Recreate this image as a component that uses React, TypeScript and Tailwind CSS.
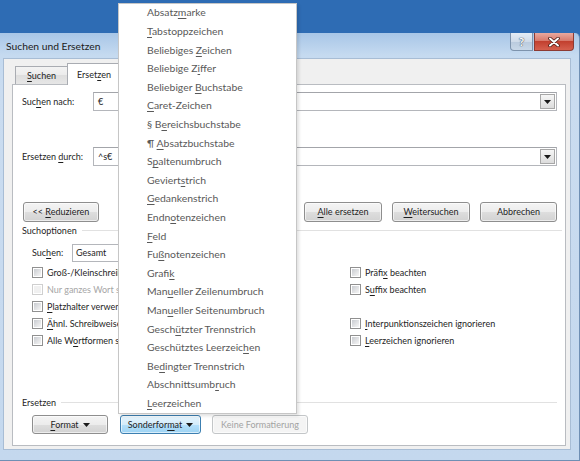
import type { ReactNode } from 'react';

// '&' marks the accelerator letter, like a Windows resource string
function Acc({ text }: { text: string }) {
  const i = text.indexOf('&');
  if (i < 0) return <span>{text}</span>;
  return (
    <span className="whitespace-pre">
      {text.slice(0, i)}
      <span className="underline underline-offset-[1.5px]">{text[i + 1]}</span>
      {text.slice(i + 2)}
    </span>
  );
}

const menuItems = [
  'Absatz&marke',
  '&Tabstoppzeichen',
  'Beliebiges &Zeichen',
  'Beliebige Z&iffer',
  'Beliebiger &Buchstabe',
  '&Caret-Zeichen',
  '§ B&ereichsbuchstabe',
  '¶ &Absatzbuchstabe',
  'S&paltenumbruch',
  'Geviert&strich',
  '&Gedankenstrich',
  'Endn&otenzeichen',
  '&Feld',
  'Fu&ßnotenzeichen',
  'Grafi&k',
  'Man&ueller Zeilenumbruch',
  'Man&ueller Seitenumbruch',
  'Gesch&ützter Trennstrich',
  'Geschütztes Leerzeic&hen',
  'Be&dingter Trennstrich',
  'Abschnittsumb&ruch',
  '&Leerzeichen',
];

function Arrow({ className = '' }: { className?: string }) {
  return (
    <svg width="7" height="4" viewBox="0 0 7 4" className={className}>
      <polygon points="0,0 7,0 3.5,4" fill="#1a1a1a" />
    </svg>
  );
}

type Variant = 'normal' | 'hot' | 'disabled';

const buttonStyles: Record<Variant, string> = {
  normal:
    'border-[#8e8e8e] bg-[linear-gradient(#f4f4f4_0%,#ececec_50%,#dedede_50%,#d2d2d2_100%)] text-[#1e1e1e]',
  hot: 'border-[#3c7fb1] bg-[linear-gradient(#e6f4fc_0%,#d3ecfb_50%,#b5e0fb_50%,#9dd3f3_100%)] text-[#1e1e1e]',
  disabled: 'border-[#c3c6c8] bg-[#f4f4f4] text-[#a3a3a3]',
};

function Button({
  label,
  width,
  variant = 'normal',
  arrow = false,
}: {
  label: string;
  width: string;
  variant?: Variant;
  arrow?: boolean;
}) {
  return (
    <div
      className={`${width} h-full flex items-center justify-center gap-[4px] rounded-[3px] border shadow-[inset_0_0_0_1px_rgba(255,255,255,0.6)] ${buttonStyles[variant]}`}
    >
      <Acc text={label} />
      {arrow && <Arrow />}
    </div>
  );
}

function ComboBox({ value }: { value: string }) {
  return (
    <div className="flex-1 h-full flex items-center justify-between bg-white border border-[#b4b6bb] border-t-[#a3a5aa] pl-[4px] pr-[1px]">
      <span className="text-[#1e1e1e]">{value}</span>
      <div className="w-[15px] h-[15px] flex items-center justify-center border border-[#a7a7a7] bg-[linear-gradient(#f6f6f6,#dcdcdc)]">
        <Arrow />
      </div>
    </div>
  );
}

function Checkbox({
  label,
  disabled = false,
  clip = false,
}: {
  label: string;
  disabled?: boolean;
  clip?: boolean;
}) {
  return (
    <div className="h-[17px] flex items-center gap-[4px] whitespace-nowrap">
      <div
        className={`w-[11px] h-[11px] shrink-0 border p-[1px] bg-white ${
          disabled ? 'border-[#cfcfcf]' : 'border-[#909090]'
        }`}
      >
        <div
          className={`w-full h-full ${
            disabled
              ? 'bg-[#f0f0f0]'
              : 'bg-[linear-gradient(135deg,#c9ccd1_0%,#e2e3e5_55%,#f6f6f6_100%)]'
          }`}
        />
      </div>
      {/* left column runs under the open menu, so cut it at the menu edge */}
      <span
        className={`${clip ? 'max-w-[71px] overflow-hidden' : ''} ${
          disabled ? 'text-[#a6a6a6]' : 'text-[#1e1e1e]'
        }`}
      >
        <Acc text={label} />
      </span>
    </div>
  );
}

function GroupHeader({ label, end }: { label: string; end: string }) {
  return (
    <div className={`h-[14px] flex items-center pl-[9px] ${end}`}>
      <span className="text-[#1e1e1e]">{label}</span>
      <div className="flex-1 h-px bg-[#e1e1e1] ml-[5px] mt-[-1px]" />
    </div>
  );
}

function Row({ children, className = '' }: { children: ReactNode; className?: string }) {
  return <div className={`flex items-center ${className}`}>{children}</div>;
}

export default function App() {
  return (
    <div className="relative w-[580px] h-[461px] overflow-hidden flex flex-col bg-[#2e6cb4] font-['Lato',sans-serif] text-[9px]">
      <div className="h-[33px] shrink-0" />

      {/* window frame */}
      <div className="flex-1 flex flex-col rounded-tr-[5px] border-r border-b border-[#6f8fb4] bg-[linear-gradient(180deg,#a8c6e7_0px,#c5daf0_22px,#cadcf0_60px,#c4d8ee_100%)]">
        <div className="h-[25px] shrink-0 flex items-start justify-between pl-[6px] pr-[5px]">
          <span className="mt-[6px] text-[10.3px] text-[#1b1b1b]">Suchen und Ersetzen</span>
          <div className="flex gap-px">
            <div className="w-[23px] h-[18px] flex items-center justify-center rounded-bl-[4px] border border-t-0 border-[#7d93ad] bg-[linear-gradient(#e4ecf5_0%,#cfdbe9_50%,#b9cadd_50%,#c9d8e8_100%)]">
              <span className="text-[12px] font-bold text-white leading-none [text-shadow:0_0_1px_#2b3b50,0_0_1px_#2b3b50]">
                ?
              </span>
            </div>
            <div className="w-[40px] h-[18px] flex items-center justify-center rounded-br-[4px] border border-t-0 border-[#8d3a32] bg-[linear-gradient(#e9a99f_0%,#d77a6c_45%,#c2402f_50%,#d5604e_100%)]">
              <svg width="12" height="10" viewBox="0 0 12 10">
                <path d="M2 1.5 L10 8.5 M10 1.5 L2 8.5" stroke="#4a1a14" strokeWidth="3.6" strokeLinecap="round" />
                <path d="M2 1.5 L10 8.5 M10 1.5 L2 8.5" stroke="#ffffff" strokeWidth="2" strokeLinecap="round" />
              </svg>
            </div>
          </div>
        </div>

        {/* client area */}
        <div className="flex-1 flex flex-col ml-[3px] mr-[8px] mb-[10px] bg-[#f0f0f0] border border-[#a8bdd5] pl-[8px] pr-[4px] pt-[4px] pb-[3px]">
          {/* tabs */}
          <div className="h-[21px] shrink-0 flex items-end">
            <div className="ml-[3px] w-[53px] h-[18px] flex items-center justify-center border border-b-0 border-[#a9acb2] bg-[linear-gradient(#f3f3f3_0%,#ebebeb_50%,#dedede_50%,#e6e6e6_100%)] text-[#1e1e1e]">
              <Acc text="&Suchen" />
            </div>
            <div className="relative z-10 -ml-px mb-[-1px] w-[54px] h-[22px] flex items-center justify-center border border-b-0 border-[#a9acb2] bg-white text-[#1e1e1e]">
              <Acc text="Erset&zen" />
            </div>
          </div>

          {/* tab panel */}
          <div className="flex-1 flex flex-col bg-white border border-[#b9bcc1]">
            <Row className="mt-[7px] h-[19px] pl-[9px] pr-[8px]">
              <span className="w-[71px] text-[#1e1e1e]">
                <Acc text="Suc&hen nach:" />
              </span>
              <ComboBox value="€" />
            </Row>

            <Row className="mt-[36px] h-[19px] pl-[9px] pr-[8px]">
              <span className="w-[71px] text-[#1e1e1e]">
                <Acc text="Ersetzen &durch:" />
              </span>
              <ComboBox value="^s€" />
            </Row>

            <Row className="mt-[36px] h-[20px] pl-[10px] pr-[8px]">
              <Button label="<< &Reduzieren" width="w-[76px]" />
              <div className="flex-1" />
              <div className="flex h-full gap-[10px]">
                <Button label="&Alle ersetzen" width="w-[78px]" />
                <Button label="&Weitersuchen" width="w-[78px]" />
                <Button label="Abbrechen" width="w-[77px]" />
              </div>
            </Row>

            <div className="mt-[2px]">
              <GroupHeader label="Suchoptionen" end="mr-[3px]" />
            </div>

            <Row className="mt-[6px] h-[18px] pl-[19px]">
              <span className="w-[40px] text-[#1e1e1e]">
                <Acc text="Suc&hen:" />
              </span>
              <div className="w-[130px] h-full flex items-center bg-white border border-[#b4b6bb] pl-[3px] text-[#1e1e1e]">
                Gesamt
              </div>
            </Row>

            <div className="mt-[2px] flex pl-[19px]">
              <div className="w-[318px] flex flex-col">
                <Checkbox label="Groß-/Kleinschreibung beachten" clip />
                <Checkbox label="Nur ganzes Wort suchen" disabled clip />
                <Checkbox label="&Platzhalter verwenden" clip />
                <Checkbox label="&Ähnl. Schreibweise (Englisch)" clip />
                <Checkbox label="Alle W&ortformen suchen (Englisch)" clip />
              </div>
              <div className="flex flex-col">
                <Checkbox label="Präfi&x beachten" />
                <Checkbox label="S&uffix beachten" />
                <div className="h-[17px]" />
                <Checkbox label="&Interpunktionszeichen ignorieren" />
                <Checkbox label="&Leerzeichen ignorieren" />
              </div>
            </div>

            <div className="mt-[47px]">
              <GroupHeader label="Ersetzen" end="mr-[8px]" />
            </div>

            <Row className="mt-[5px] h-[19px] pl-[19px] gap-[12px]">
              <Button label="&Format" width="w-[76px]" arrow />
              <Button label="Sonderfor&mat" width="w-[81px]" variant="hot" arrow />
              <div className="ml-[-1px] h-full">
                <Button label="Keine Formatierung" width="w-[96px]" variant="disabled" />
              </div>
            </Row>
          </div>
        </div>
      </div>

      {/* Sonderformat drop-down menu */}
      <div className="absolute left-[118px] top-[3px] w-[179px] bg-white border border-[#c6c6c6] shadow-[2px_2px_3px_rgba(0,0,0,0.12)] z-20">
        {menuItems.map((item) => (
          <div
            key={item}
            className="h-[18.6px] flex items-center pl-[28px] text-[10.4px] text-[#595959] whitespace-nowrap"
          >
            <Acc text={item} />
          </div>
        ))}
      </div>
    </div>
  );
}
